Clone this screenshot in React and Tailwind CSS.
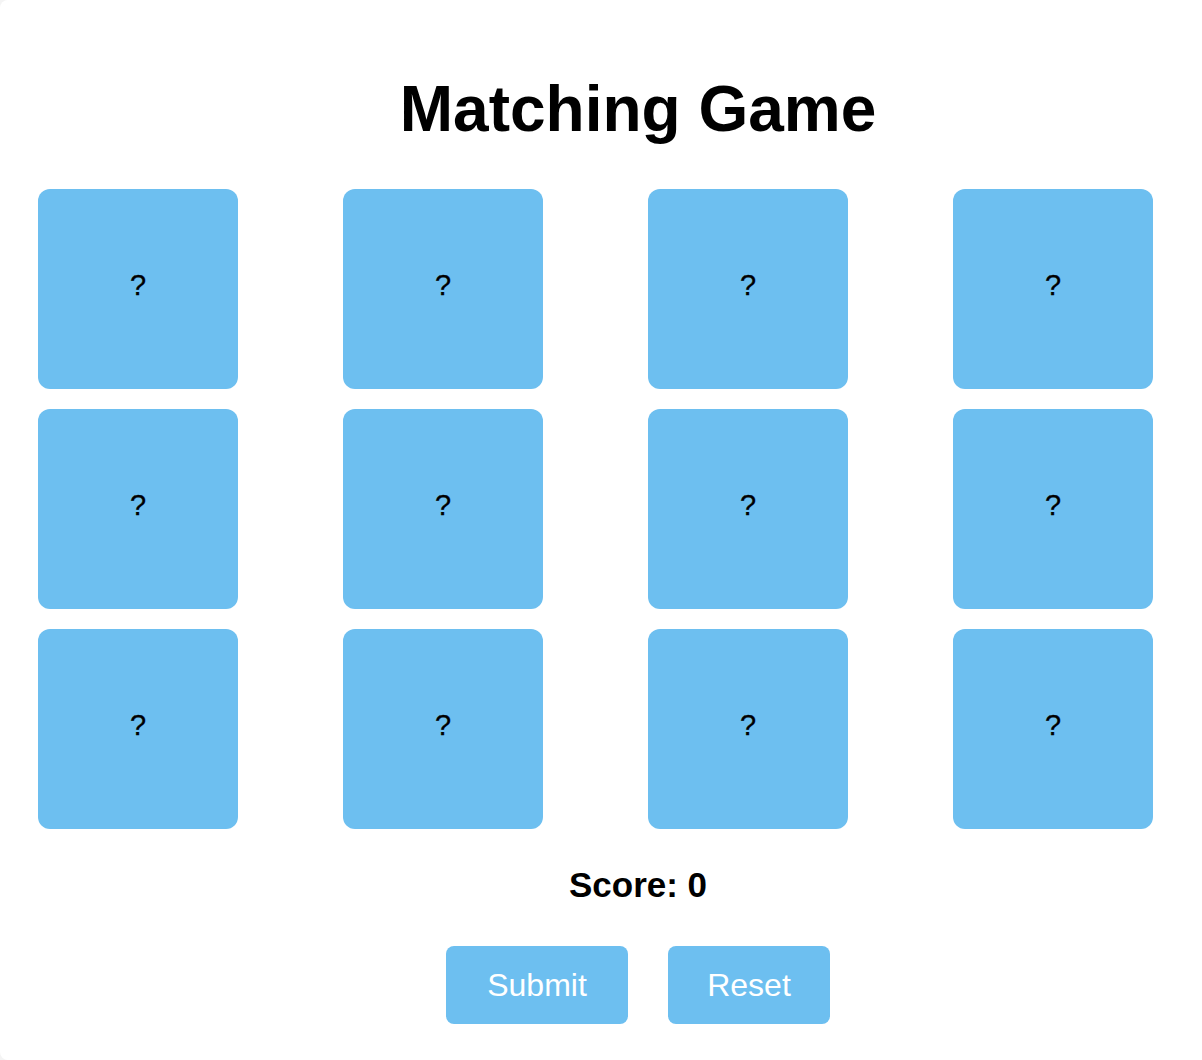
import React from "react";

export default function App() {
  const cards = Array.from({ length: 12 });
  return (
    <div
      className="w-[1202px] h-[1060px] overflow-hidden bg-[#f4f4f4]"
      style={{ fontFamily: '"Liberation Sans", Arial, sans-serif' }}
    >
      <div className="w-[1300px] h-[1060px] bg-white rounded-lg pl-[38px] pt-[77px]">
        <div className="w-[1200px] flex flex-col items-center">
          <h1 className="text-[64px] leading-[64px] font-bold text-black m-0">Matching Game</h1>
          <div className="grid grid-cols-4 gap-5 w-full mt-[48px]">
            {cards.map((_, i) => (
              <div
                key={i}
                className="w-[200px] h-[200px] rounded-xl bg-[#6dbff0] flex items-center justify-center pb-[6px] text-[29px] text-black [-webkit-text-stroke:0.3px_black]"
              >
                ?
              </div>
            ))}
          </div>
          <div className="mt-[34px] text-[35px] leading-[44px] font-bold text-black">Score: 0</div>
          <div className="flex gap-10 mt-[39px]">
            <button className="w-[182px] h-[78px] rounded-lg bg-[#6dbff0] text-white text-[32px]">Submit</button>
            <button className="w-[162px] h-[78px] rounded-lg bg-[#6dbff0] text-white text-[32px]">Reset</button>
          </div>
        </div>
      </div>
    </div>
  );
}
